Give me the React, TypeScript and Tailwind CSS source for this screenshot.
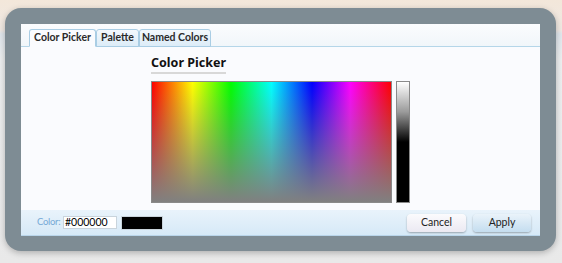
import React from "react";

const font = { fontFamily: '"Noto Sans", "DejaVu Sans", sans-serif' };
const small = { fontFamily: 'Lato, "Noto Sans", sans-serif' };

export default function App() {
  const tabs = [
    { label: "Color Picker", w: "w-[67px]", active: true },
    { label: "Palette", w: "w-[43px]", active: false },
    { label: "Named Colors", w: "w-[72px]", active: false },
  ];
  return (
    <div
      className="w-[562px] h-[263px] overflow-hidden bg-[linear-gradient(to_bottom,#f3e7da_0px,#efe8e2_30px,#dfe6ec_34px,#eceeef_60px,#e9e9e9_263px)] pt-[8px] pl-[5px]"
      style={font}
    >
      <div className="w-[551px] h-[243px] rounded-[16px] bg-[#7e8c94] pt-[16px] pl-[16px] shadow-[0_2px_6px_rgba(0,0,0,0.25)]">
        <div className="w-[519px] h-[212px] bg-[#fafbfe] flex flex-col">
          {/* Tab strip */}
          <div className="h-[23px] shrink-0 bg-[linear-gradient(to_bottom,#fbfcfe,#f1f6fa)] border-b border-[#b5d6e9] flex items-end pl-[8px]">
            {tabs.map((t) => (
              <div
                key={t.label}
                style={small}
                className={`${t.w} h-[18px] -mb-px flex items-center justify-center whitespace-nowrap rounded-t-[3px] border border-[#a9cde4] text-[10.5px] font-bold text-[#2a2a2a] ${
                  t.active
                    ? "bg-[#fafbfe] border-b-[#fafbfe]"
                    : "bg-[linear-gradient(to_bottom,#f3f8fc,#dcecf8)]"
                }`}
              >
                {t.label}
              </div>
            ))}
          </div>
          {/* Content */}
          <div className="flex-1 flex justify-center pt-[8px]">
            <div className="flex flex-col">
              <div className="self-start text-[12.5px] font-bold text-[#111] leading-[16px] pb-[1px] border-b-2 border-[#d8d8d8]">
                Color Picker
              </div>
              <div className="flex mt-[7px] gap-[4px]">
                <div className="w-[241px] h-[122px] border border-[#8a8a8a] relative bg-[linear-gradient(to_right,#ff0000,#ffff00_17%,#00ff00_33%,#00ffff_50%,#0000ff_67%,#ff00ff_83%,#ff0000)]">
                  <div className="absolute inset-0 bg-[linear-gradient(to_bottom,rgba(128,128,128,0),rgba(128,128,128,1))]" />
                </div>
                <div className="w-[14px] h-[122px] border border-[#8a8a8a] bg-[linear-gradient(to_bottom,#ffffff,#9a9a9a_25%,#000000_50%,#000000)]" />
              </div>
            </div>
          </div>
          {/* Footer */}
          <div
            className="h-[26px] shrink-0 bg-[linear-gradient(to_bottom,#e9f3fb,#d6e9f7)] border-b border-[#b9d5ea] flex items-center pl-[16px] pr-[9px]"
            style={small}
          >
            <span className="w-[26px] shrink-0 whitespace-nowrap text-[9.5px] tracking-[-0.3px] text-[#76a9d6]">Color:</span>
            <div className="w-[54px] h-[13px] shrink-0 bg-white border border-[#c9d4dc] text-[10.5px] leading-[11px] text-black pl-[1px]">
              #000000
            </div>
            <div className="w-[42px] h-[14px] shrink-0 bg-black border border-[#c9d4dc] ml-[4px]" />
            <div className="flex-1" />
            <button className="w-[59px] h-[18px] rounded-[4px] bg-[linear-gradient(to_bottom,#fbfbfd,#ebe9f2)] shadow-[0_1px_2px_rgba(0,0,0,0.3)] text-[10.5px] text-[#222] flex items-center justify-center">
              Cancel
            </button>
            <button className="w-[58px] h-[18px] ml-[7px] rounded-[4px] bg-[linear-gradient(to_bottom,#eaf3fa,#c4ddef)] shadow-[0_1px_2px_rgba(0,0,0,0.3)] text-[10.5px] text-[#222] flex items-center justify-center">
              Apply
            </button>
          </div>
        </div>
      </div>
    </div>
  );
}
